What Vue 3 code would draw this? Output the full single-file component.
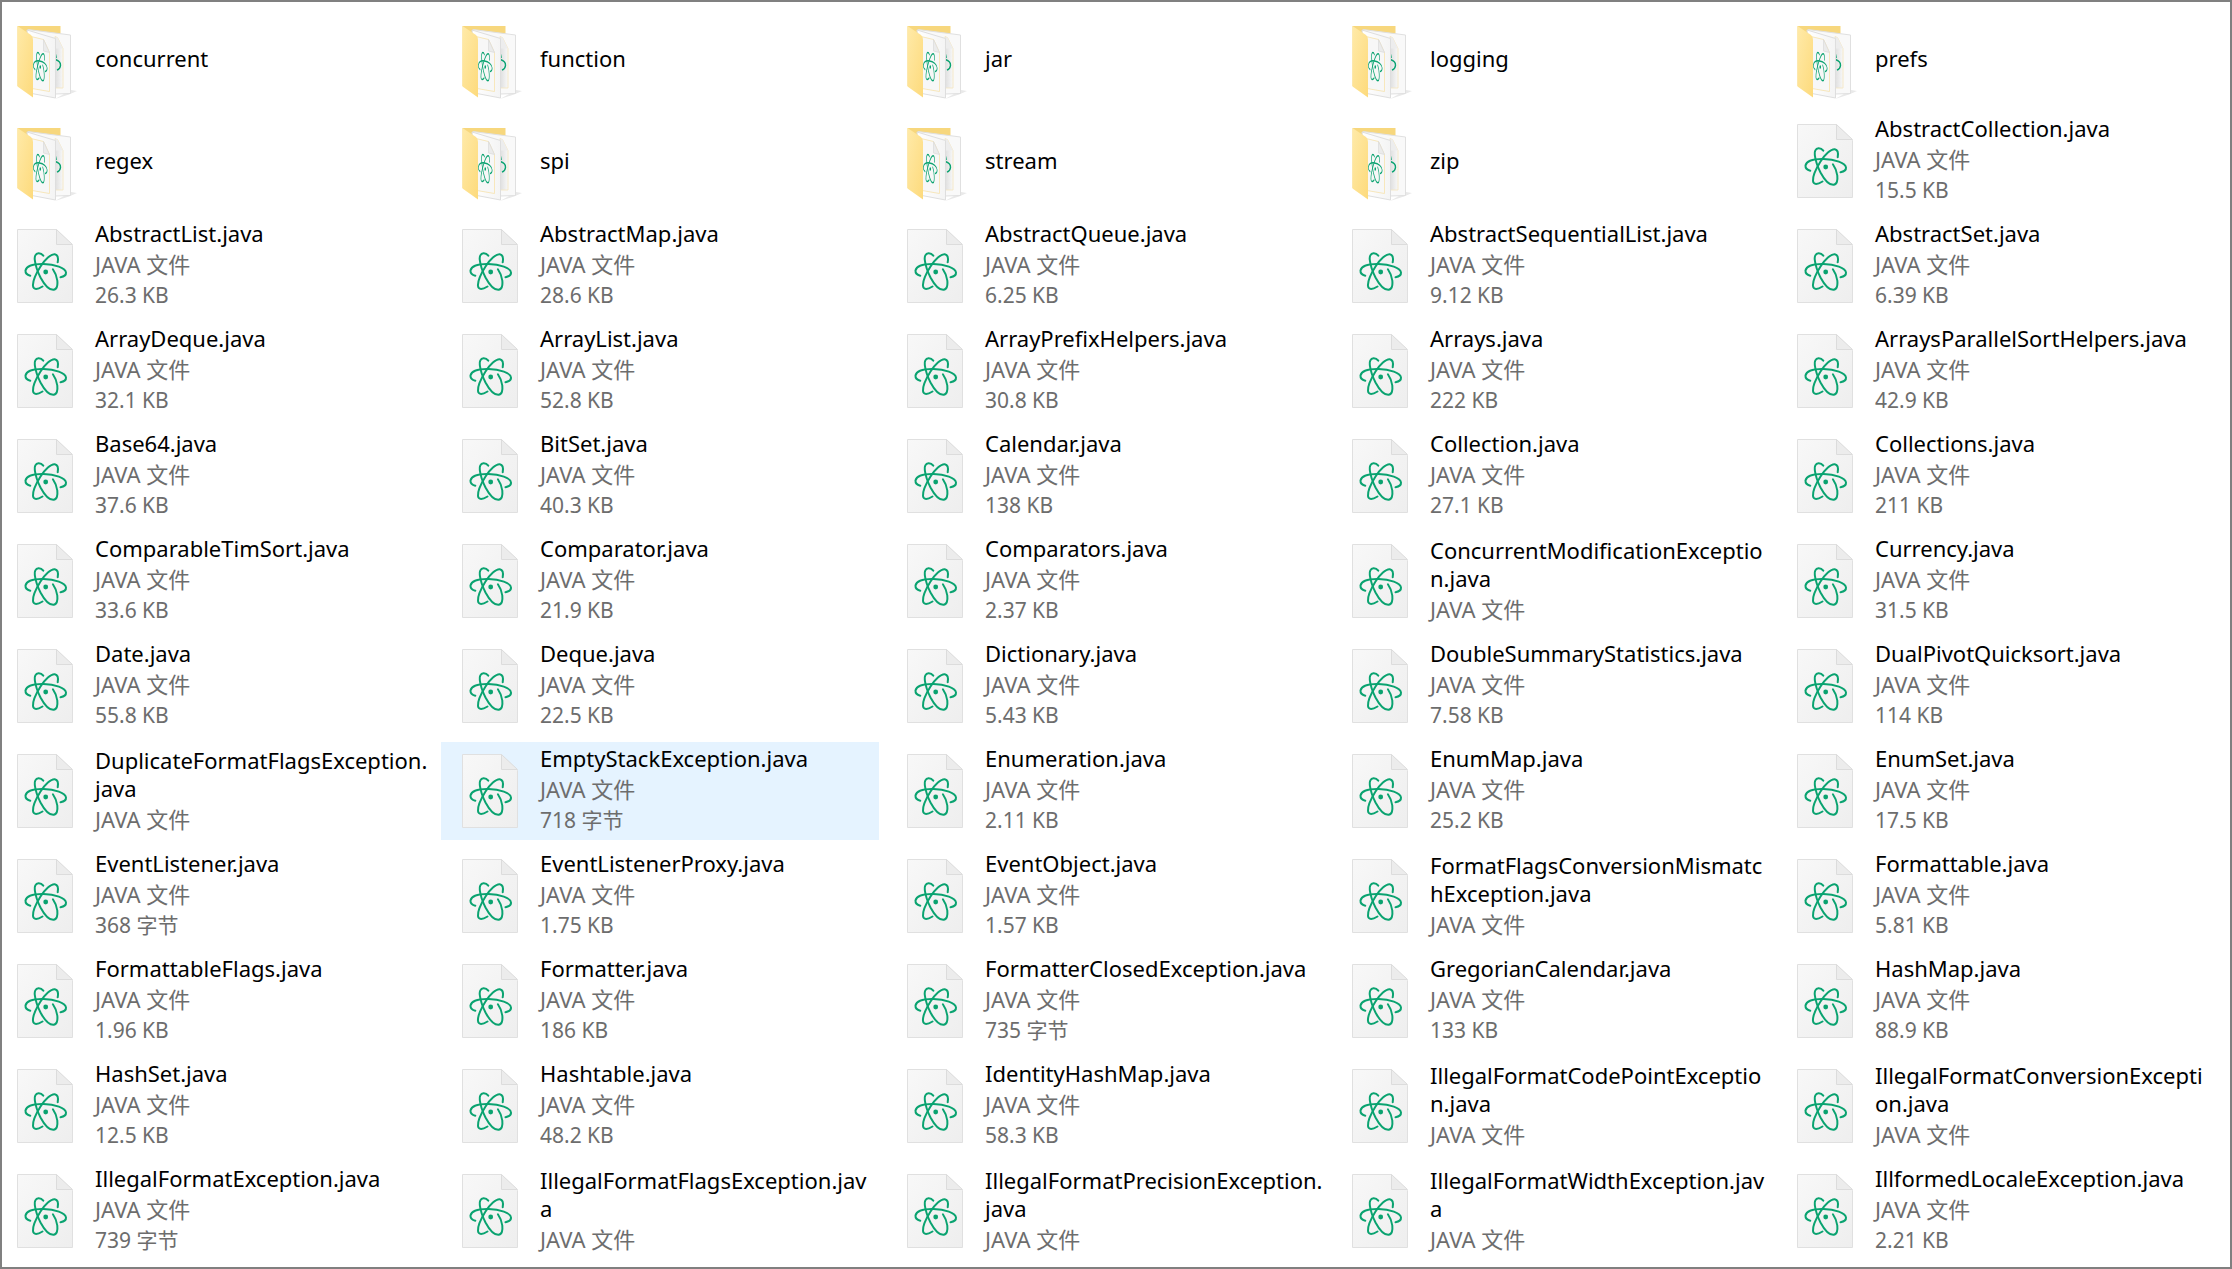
<script setup>
const folders = ['concurrent', 'function', 'jar', 'logging', 'prefs', 'regex', 'spi', 'stream', 'zip']

const files = [
  ['AbstractCollection.java', '15.5 KB'],
  ['AbstractList.java', '26.3 KB'],
  ['AbstractMap.java', '28.6 KB'],
  ['AbstractQueue.java', '6.25 KB'],
  ['AbstractSequentialList.java', '9.12 KB'],
  ['AbstractSet.java', '6.39 KB'],
  ['ArrayDeque.java', '32.1 KB'],
  ['ArrayList.java', '52.8 KB'],
  ['ArrayPrefixHelpers.java', '30.8 KB'],
  ['Arrays.java', '222 KB'],
  ['ArraysParallelSortHelpers.java', '42.9 KB'],
  ['Base64.java', '37.6 KB'],
  ['BitSet.java', '40.3 KB'],
  ['Calendar.java', '138 KB'],
  ['Collection.java', '27.1 KB'],
  ['Collections.java', '211 KB'],
  ['ComparableTimSort.java', '33.6 KB'],
  ['Comparator.java', '21.9 KB'],
  ['Comparators.java', '2.37 KB'],
  ['ConcurrentModificationExceptio\nn.java', ''],
  ['Currency.java', '31.5 KB'],
  ['Date.java', '55.8 KB'],
  ['Deque.java', '22.5 KB'],
  ['Dictionary.java', '5.43 KB'],
  ['DoubleSummaryStatistics.java', '7.58 KB'],
  ['DualPivotQuicksort.java', '114 KB'],
  ['DuplicateFormatFlagsException.\njava', ''],
  ['EmptyStackException.java', '718 字节', true],
  ['Enumeration.java', '2.11 KB'],
  ['EnumMap.java', '25.2 KB'],
  ['EnumSet.java', '17.5 KB'],
  ['EventListener.java', '368 字节'],
  ['EventListenerProxy.java', '1.75 KB'],
  ['EventObject.java', '1.57 KB'],
  ['FormatFlagsConversionMismatc\nhException.java', ''],
  ['Formattable.java', '5.81 KB'],
  ['FormattableFlags.java', '1.96 KB'],
  ['Formatter.java', '186 KB'],
  ['FormatterClosedException.java', '735 字节'],
  ['GregorianCalendar.java', '133 KB'],
  ['HashMap.java', '88.9 KB'],
  ['HashSet.java', '12.5 KB'],
  ['Hashtable.java', '48.2 KB'],
  ['IdentityHashMap.java', '58.3 KB'],
  ['IllegalFormatCodePointExceptio\nn.java', ''],
  ['IllegalFormatConversionExcepti\non.java', ''],
  ['IllegalFormatException.java', '739 字节'],
  ['IllegalFormatFlagsException.jav\na', ''],
  ['IllegalFormatPrecisionException.\njava', ''],
  ['IllegalFormatWidthException.jav\na', ''],
  ['IllformedLocaleException.java', '2.21 KB'],
]
</script>

<template>
  <main class="window">
    <svg class="defs" aria-hidden="true">
      <defs>
        <linearGradient id="paper" x1="0" y1="0" x2="1" y2="1">
          <stop offset="0" stop-color="#f8f8f8" />
          <stop offset="1" stop-color="#eeeeee" />
        </linearGradient>
        <linearGradient id="flap" x1="0" y1="0" x2="1" y2="1">
          <stop offset="0" stop-color="#ffeaa8" />
          <stop offset="1" stop-color="#fdda7c" />
        </linearGradient>
        <linearGradient id="sheet" x1="0" y1="0" x2="1" y2="0">
          <stop offset="0" stop-color="#ffffff" />
          <stop offset="1" stop-color="#f4f4f4" />
        </linearGradient>
        <linearGradient id="shade" x1="0" y1="0" x2="1" y2="0">
          <stop offset="0" stop-color="#dedede" />
          <stop offset="1" stop-color="#f8f8f8" />
        </linearGradient>
        <g id="atom" fill="none" stroke="#0aa370" stroke-width="2" stroke-linecap="round">
          <path d="M13.300 46.800C10.500 46 8.300 44 8.500 41.500C9.500 37 17 34.800 26.500 35C38 35.300 48.500 39 49 43.500C49.200 45.800 47 47.500 43.500 48.200" />
          <path d="M26.300 26.700C25 25 23.500 24.200 21.500 24.300C18.500 24.500 17.300 27.500 17.800 31C18.500 37 20.500 42.500 23.500 48.500C27.500 56 32.500 61 36.500 60.800C40 60.500 40.800 56.500 40.300 51.500C39.800 47.500 38.500 44 35.900 40.300" />
          <path d="M40.700 33.300C41.500 29 41 25.800 37.800 25.200C34 24.800 28 30.500 23.500 37.500C18.500 45.500 15.500 52.500 16 57C16.500 61 20.500 60.500 25.500 57.500" />
          <circle cx="28.700" cy="43" r="2.400" fill="#0aa370" stroke="none" />
        </g>
        <symbol id="file-icon" viewBox="0 0 56 74">
          <path d="M.5 .5H39.500L55.500 16.500V73.500H.5Z" fill="url(#paper)" stroke="#e0e0e0" />
          <path d="M39.500 .5L55.500 15.500H39.500Z" fill="#ececec" stroke="#dcdcdc" />
          <use href="#atom" />
        </symbol>
        <symbol id="folder-icon" viewBox="0 0 62 76">
          <path d="M38 73L54 64L60 65L52 68.500Z" fill="#e9e9e9" />
          <path d="M.5 0H43.500V60H.5Z" fill="#f7d77d" />
          <path d="M11 3.500L53.500 9V67.500L38 68Z" fill="#f9f9f9" stroke="#e0e0e0" />
          <path d="M38 10.500L40.500 11.500L46 22.500V62H38Z" fill="url(#shade)" stroke="#f5e6bf" stroke-width=".8" />
          <path d="M38.500 11L40.500 11.500L46 22.500H38.500Z" fill="#ededed" />
          <path d="M38.500 28.500L39.200 32M38.500 33.500C41.500 34.500 43.700 36.800 43.500 39.500C43.300 41.500 41.700 43.500 40 44.200" fill="none" stroke="#0aa370" stroke-width="1.400" />
          <path d="M10 4L38.500 12.500V72L15 67.500Z" fill="url(#sheet)" stroke="#dedede" />
          <path d="M14 10.500L26.500 13.500L32.500 26.500V65.500L15 62.500" fill="#f7f7f7" stroke="#f6e4b4" stroke-width=".9" />
          <path d="M26.500 13.500L32.500 26.500L26.500 25Z" fill="#ebebeb" stroke="#dadada" stroke-width=".7" />
          <use href="#atom" transform="matrix(.34 .03 0 .76 13.500 7.500)" />
          <path d="M.5 0L14 9Q16 10.500 16 14V71.500L.5 60.500Z" fill="url(#flap)" />
        </symbol>
      </defs>
    </svg>

    <ul class="grid">
      <li v-for="name in folders" :key="name" class="item folder">
        <svg class="icon-folder" aria-hidden="true"><use href="#folder-icon" /></svg>
        <span class="name">{{ name }}</span>
      </li>
      <li v-for="[name, size, hovered] in files" :key="name" class="item file" :class="{ hovered }">
        <svg class="icon-file" aria-hidden="true"><use href="#file-icon" /></svg>
        <div class="text">
          <span class="name">{{ name }}</span>
          <span class="kind">JAVA 文件</span>
          <span v-if="size" class="meta">{{ size }}</span>
        </div>
      </li>
    </ul>
  </main>
</template>

<style>
body {
  margin: 0;
  background: #fff;
}
</style>

<style scoped>
.window {
  box-sizing: border-box;
  min-height: 100vh;
  border: 2px solid #808080;
  overflow: hidden;
  background: #fff;
  font-family: "Noto Sans", "Noto Sans CJK SC", sans-serif;
  font-size: 22px;
  color: #000;
}
.defs {
  position: absolute;
  width: 0;
  height: 0;
}
.grid {
  display: grid;
  grid-template-columns: repeat(5, minmax(0, 1fr));
  gap: 7px;
  margin: 0 0 0 -6px;
  padding: 8px 16px 0 0;
  list-style: none;
}
.item {
  box-sizing: border-box;
  display: flex;
  align-items: center;
  padding-left: 21px;
}
.folder {
  align-self: start;
  min-height: 95px;
  padding-top: 1px;
}
.file {
  min-height: 98px;
}
.hovered {
  background: #e5f3ff;
}
.icon-file {
  flex: none;
  width: 56px;
  height: 74px;
  margin-right: 22px;
}
.icon-folder {
  flex: none;
  width: 62px;
  height: 76px;
  margin: 12px 16px 0 0;
}
.text {
  display: flex;
  flex-direction: column;
  padding-bottom: 3px;
}
.name {
  line-height: 28px;
  white-space: pre;
}
.kind,
.meta {
  line-height: 30px;
  color: #6d6d6d;
}
.kind {
  margin-top: 2px;
}
.meta {
  margin-top: 1px;
  font-size: 21px;
}
</style>
